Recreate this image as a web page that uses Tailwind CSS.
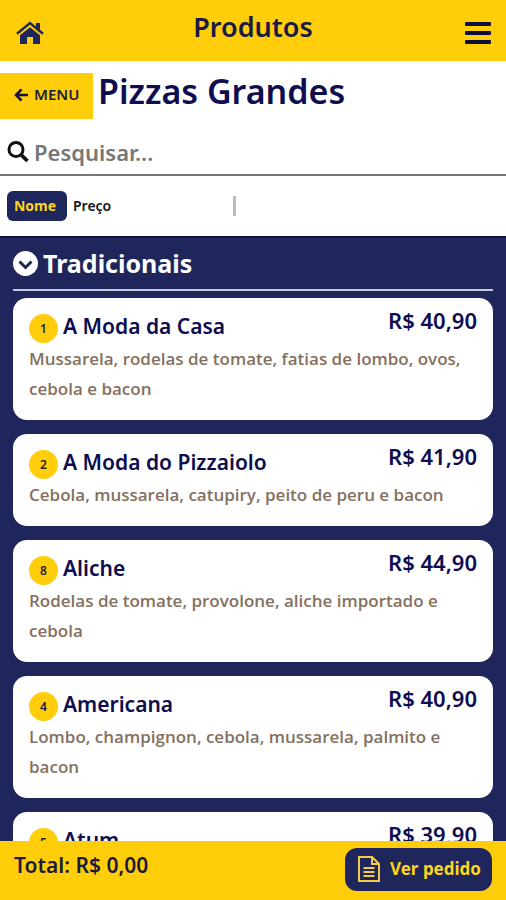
<!DOCTYPE html>
<html lang="pt-BR">
<head>
<meta charset="utf-8">
<meta name="viewport" content="width=device-width, initial-scale=1">
<title>Produtos</title>
<script src="https://cdn.jsdelivr.net/npm/@tailwindcss/browser@4"></script>
</head>
<body class="flex h-screen flex-col overflow-hidden bg-white font-['Noto_Sans','Open_Sans',sans-serif] font-semibold text-[#0d0d4f]">
  <header class="grid h-[61px] shrink-0 grid-cols-[1fr_auto_1fr] items-center bg-[#ffcd0a] px-[14px]">
    <a href="#" aria-label="Início" class="justify-self-start pt-1 pl-[2px]">
      <svg class="h-6 w-7" viewBox="0 0 28 24"><path d="M14 6.200 4 14.300V23h7v-7h6v7h7v-8.700zM20 2h4v7l-4-3.300z" fill="#1e265b"/><path d="M1 12.700 14 2l13 10.700" fill="none" stroke="#1e265b" stroke-width="2.400"/></svg>
    </a>
    <h1 class="pb-2 text-[27px] leading-8 text-[#1a1a45]">Produtos</h1>
    <button type="button" aria-label="Abrir menu" class="justify-self-end pt-1">
      <svg class="h-6 w-[27px]" viewBox="0 0 27 24" fill="#0d0d3b"><rect x="0" y="1" width="26" height="4" rx="1"/><rect x="0" y="10" width="26" height="4" rx="1"/><rect x="0" y="19" width="26" height="4" rx="1"/></svg>
    </button>
  </header>

  <div class="flex h-[69px] shrink-0 items-center gap-[5px]">
    <a href="#" class="flex h-[46px] w-[93px] shrink-0 items-center gap-[6px] bg-[#ffcd0a] pb-[2px] pl-[14px] text-[15px] text-[#1c1c40]">
      <svg class="h-[14px] w-[14px]" viewBox="0 0 14 14" fill="none" stroke="#14143c" stroke-width="2.600"><path d="M7.500 1.300 2 7l5.500 5.700M2.500 7H14"/></svg>
      MENU
    </a>
    <h2 class="pb-[10px] text-[34px] leading-[46px]">Pizzas Grandes</h2>
  </div>

  <form class="flex h-[46px] shrink-0 items-center gap-[5px] border-b-2 border-[#777] px-[7px]">
    <label for="q" class="shrink-0" aria-label="Pesquisar">
      <svg class="h-[22px] w-[22px]" viewBox="0 0 22 22" fill="none" stroke="#111"><circle cx="9" cy="8.500" r="7" stroke-width="3"/><path d="m13.800 13.500 6.700 6.500" stroke-width="3.800"/></svg>
    </label>
    <input id="q" type="search" placeholder="Pesquisar..." class="min-w-0 flex-1 text-[22px] leading-8 outline-none placeholder:text-[#777]">
  </form>

  <div class="flex h-[60px] shrink-0 items-center px-[7px] text-[14px] text-[#111]">
    <button type="button" class="h-[30px] w-[60px] rounded-md bg-[#1e265b] pr-1 pb-[2px] font-bold text-[#ffd51c]">Nome</button>
    <button type="button" class="ml-[6px] pb-[2px]">Preço</button>
    <span class="ml-[122px] h-5 w-[3px] bg-[#bbb]"></span>
  </div>

  <main class="min-h-0 flex-1 overflow-y-auto border-t-2 border-[#10123a] bg-[#1e265b] px-[13px] [scrollbar-width:none]">
    <h3 class="mb-[7px] flex h-[53px] items-center gap-[5px] border-b-2 border-[#c9cbdc] text-[25px] font-bold text-white">
      <svg class="h-[25px] w-[25px]" viewBox="0 0 25 25"><circle cx="12.500" cy="12.500" r="12.500" fill="#fff"/><path d="m6.500 10.500 6 6 6-6" fill="none" stroke="#1e265b" stroke-width="3"/></svg>
      Tradicionais
    </h3>
    <ul class="flex flex-col gap-[14px] pb-[14px]">
      <li class="rounded-[14px] bg-white px-4 py-4">
        <div class="flex h-[30px] items-start gap-[5px]">
          <span class="flex size-[29px] shrink-0 items-center justify-center rounded-full bg-[#ffcd0a] text-xs text-[#22223a]">1</span>
          <h4 class="flex-1 text-[21px] leading-6">A Moda da Casa</h4>
          <span class="mt-[-8px] text-[22px] leading-[28px]">R$ 40,90</span>
        </div>
        <p class="font-['Open_Sans'] text-[17px] leading-[30px] text-[#84705f]">Mussarela, rodelas de tomate, fatias de lombo, ovos, cebola e bacon</p>
      </li>
      <li class="rounded-[14px] bg-white px-4 py-4">
        <div class="flex h-[30px] items-start gap-[5px]">
          <span class="flex size-[29px] shrink-0 items-center justify-center rounded-full bg-[#ffcd0a] text-xs text-[#22223a]">2</span>
          <h4 class="flex-1 text-[21px] leading-6">A Moda do Pizzaiolo</h4>
          <span class="mt-[-8px] text-[22px] leading-[28px]">R$ 41,90</span>
        </div>
        <p class="font-['Open_Sans'] text-[17px] leading-[30px] text-[#84705f]">Cebola, mussarela, catupiry, peito de peru e bacon</p>
      </li>
      <li class="rounded-[14px] bg-white px-4 py-4">
        <div class="flex h-[30px] items-start gap-[5px]">
          <span class="flex size-[29px] shrink-0 items-center justify-center rounded-full bg-[#ffcd0a] text-xs text-[#22223a]">8</span>
          <h4 class="flex-1 text-[21px] leading-6">Aliche</h4>
          <span class="mt-[-8px] text-[22px] leading-[28px]">R$ 44,90</span>
        </div>
        <p class="font-['Open_Sans'] text-[17px] leading-[30px] text-[#84705f]">Rodelas de tomate, provolone, aliche importado e cebola</p>
      </li>
      <li class="rounded-[14px] bg-white px-4 py-4">
        <div class="flex h-[30px] items-start gap-[5px]">
          <span class="flex size-[29px] shrink-0 items-center justify-center rounded-full bg-[#ffcd0a] text-xs text-[#22223a]">4</span>
          <h4 class="flex-1 text-[21px] leading-6">Americana</h4>
          <span class="mt-[-8px] text-[22px] leading-[28px]">R$ 40,90</span>
        </div>
        <p class="font-['Open_Sans'] text-[17px] leading-[30px] text-[#84705f]">Lombo, champignon, cebola, mussarela, palmito e bacon</p>
      </li>
      <li class="rounded-[14px] bg-white px-4 py-4">
        <div class="flex h-[30px] items-start gap-[5px]">
          <span class="flex size-[29px] shrink-0 items-center justify-center rounded-full bg-[#ffcd0a] text-xs text-[#22223a]">5</span>
          <h4 class="flex-1 text-[21px] leading-6">Atum</h4>
          <span class="mt-[-8px] text-[22px] leading-[28px]">R$ 39,90</span>
        </div>
      </li>
    </ul>
  </main>

  <footer class="flex h-[59px] shrink-0 items-center justify-between bg-[#ffcd0a] px-[14px] text-[#1b1b3f]">
    <p class="pb-3 text-[21px] leading-8">Total: R$ 0,00</p>
    <button type="button" class="mb-[2px] flex h-[43px] w-[147px] items-center gap-[10px] rounded-xl bg-[#1e265b] pb-[2px] pl-[13px] text-[17px] font-bold text-[#ffd51c]">
      <svg class="h-[26px] w-[22px] shrink-0" viewBox="0 0 22 26" fill="none" stroke="#f2cc49" stroke-width="2"><path d="M1 1h13l7 7v17H1zM14 1v7h7M5.500 12h11M5.500 16h11M5.500 20h11"/></svg>
      Ver pedido
    </button>
  </footer>
</body>
</html>
